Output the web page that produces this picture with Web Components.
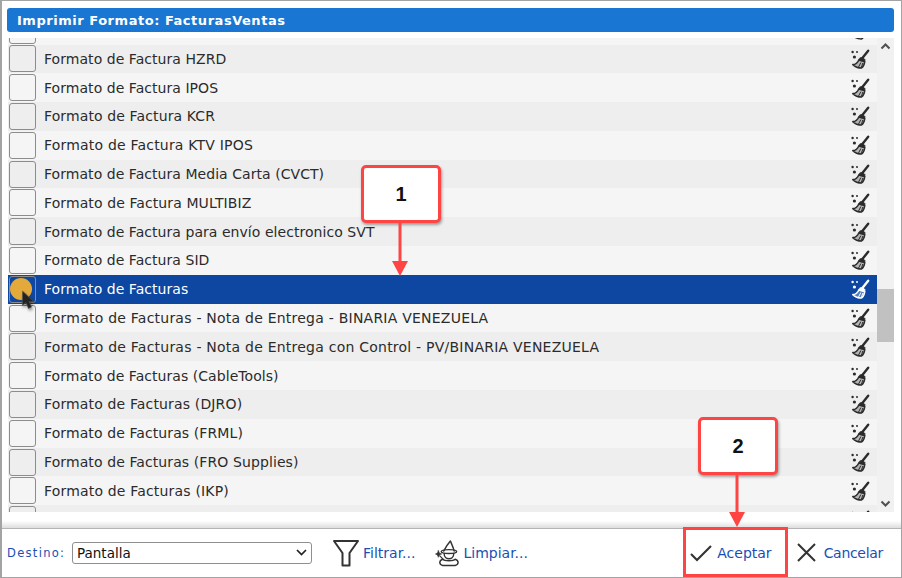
<!DOCTYPE html>
<html>
<head>
<meta charset="utf-8">
<title>Imprimir Formato</title>
<style>
  html, body { margin: 0; padding: 0; background: #fff; }
  body { width: 902px; height: 578px; overflow: hidden; font-family: "DejaVu Sans", sans-serif; }
</style>
</head>
<body>
<print-dialog>
  <title-bar slot="title">Imprimir Formato: FacturasVentas</title-bar>
  <format-list slot="list">
    <format-row></format-row>
    <format-row>Formato de Factura HZRD</format-row>
    <format-row>Formato de Factura IPOS</format-row>
    <format-row style="--track:.12px">Formato de Factura KCR</format-row>
    <format-row style="--track:.2px">Formato de Factura KTV IPOS</format-row>
    <format-row>Formato de Factura Media Carta (CVCT)</format-row>
    <format-row style="--track:.1px">Formato de Factura MULTIBIZ</format-row>
    <format-row>Formato de Factura para envío electronico SVT</format-row>
    <format-row>Formato de Factura SID</format-row>
    <format-row selected>Formato de Facturas</format-row>
    <format-row style="--track:.23px">Formato de Facturas - Nota de Entrega - BINARIA VENEZUELA</format-row>
    <format-row style="--track:.23px">Formato de Facturas - Nota de Entrega con Control - PV/BINARIA VENEZUELA</format-row>
    <format-row>Formato de Facturas (CableTools)</format-row>
    <format-row style="--track:.15px">Formato de Facturas (DJRO)</format-row>
    <format-row style="--track:.1px">Formato de Facturas (FRML)</format-row>
    <format-row style="--track:.1px">Formato de Facturas (FRO Supplies)</format-row>
    <format-row style="--track:.18px">Formato de Facturas (IKP)</format-row>
    <format-row></format-row>
  </format-list>
  <footer-bar slot="footer"></footer-bar>
  <call-out slot="over" style="left:361px;top:165px" arrow="53">1</call-out>
  <call-out slot="over" style="left:698px;top:417px" arrow="52">2</call-out>
  <click-mark slot="over"></click-mark>
</print-dialog>

<script>
const BROOM = `
  <svg viewBox="0 0 20 20" width="20" height="20" fill="none" stroke="currentColor">
    <circle cx="2.6" cy="3" r="1.2" fill="currentColor" stroke="none"/>
    <circle cx="7" cy="3" r="1" fill="currentColor" stroke="none"/>
    <circle cx="4.4" cy="8" r="1.6" fill="currentColor" stroke="none"/>
    <path d="M18.2 1.8 L12.4 9" stroke-width="2.4" stroke-linecap="round"/>
    <path d="M9.4 9.4 C10.6 7.8 13.4 8.4 15 10.6 L14.6 12.6 L8.6 11.2 Z" fill="currentColor" stroke="currentColor" stroke-width=".8" stroke-linejoin="round"/>
    <path d="M8.8 11 L14.8 12.4 C14.4 15.4 13 18 11.6 19 C8.6 19 5 17.8 2.8 15.6 C5.6 15.6 7.6 13.8 8.8 11 Z" fill="currentColor" fill-opacity=".3" stroke-width="1.5" stroke-linejoin="round"/>
    <path d="M8.6 18 L10.8 13.6 M11.4 18.4 L12.8 14" stroke-width="1"/>
  </svg>`;

class PrintDialog extends HTMLElement {
  constructor() {
    super();
    this.attachShadow({ mode: 'open' }).innerHTML = `
    <style>
      :host {
        display: flex;
        flex-direction: column;
        position: relative;
        box-sizing: border-box;
        width: 902px;
        height: 578px;
        border: solid #a3a3a3;
        border-width: 1px 1px 1px 2px;
        background: #fff;
        overflow: hidden;
      }
      .body {
        flex: none;
        display: flex;
        flex-direction: column;
        padding: 7px 7px 0 5px;
      }
      .fade { flex: 1; background: linear-gradient(#fff 55%, #dedede); }
      .over { position: absolute; left: -2px; top: -1px; }
    </style>
    <div class="body">
      <slot name="title"></slot>
      <slot name="list"></slot>
    </div>
    <div class="fade"></div>
    <slot name="footer"></slot>
    <div class="over"><slot name="over"></slot></div>`;
  }
}

class TitleBar extends HTMLElement {
  constructor() {
    super();
    this.attachShadow({ mode: 'open' }).innerHTML = `
    <style>
      :host {
        display: flex;
        align-items: center;
        flex: none;
        height: 24px;
        padding-left: 10px;
        background: #1976d2;
        border-radius: 3px;
        color: #fff;
        font: bold 13px "DejaVu Sans", sans-serif;
        letter-spacing: 0.53px;
      }
    </style><slot></slot>`;
  }
}

class FormatList extends HTMLElement {
  constructor() {
    super();
    this.attachShadow({ mode: 'open' }).innerHTML = `
    <style>
      :host {
        display: flex;
        flex: none;
        height: 474px;
        margin-top: 6px;
        overflow: hidden;
      }
      .view { width: 869px; margin-left: 1px; overflow: hidden; }
      .rows { display: flex; flex-direction: column; margin-top: -22.3px; }
      .bar {
        position: relative;
        width: 17px;
        background: #f1f1f1;
      }
      .thumb { position: absolute; left: 0; right: 0; top: 251px; height: 53px; background: #c1c1c1; }
      .bar svg { position: absolute; left: 3px; }
    </style>
    <div class="view"><div class="rows"><slot></slot></div></div>
    <div class="bar">
      <svg style="top:4px" width="11" height="8" viewBox="0 0 11 8"><path d="M1.5 6.5 L5.5 2.5 L9.5 6.5" fill="none" stroke="#505050" stroke-width="2"/></svg>
      <div class="thumb"></div>
      <svg style="top:462px" width="11" height="8" viewBox="0 0 11 8"><path d="M1.5 1.5 L5.5 5.5 L9.5 1.5" fill="none" stroke="#505050" stroke-width="2"/></svg>
    </div>`;
  }
}

class FormatRow extends HTMLElement {
  constructor() {
    super();
    this.attachShadow({ mode: 'open' }).innerHTML = `
    <style>
      :host {
        display: flex;
        align-items: center;
        flex: none;
        height: 28.8px;
        box-sizing: border-box;
        background: #f5f5f5;
        color: #2b2b2b;
        font: 14px "DejaVu Sans", sans-serif;
        letter-spacing: var(--track, .05px);
      }
      :host(:nth-child(even)) { background: #eeeeee; }
      :host([selected]) { background: #0d47a1; color: #fff; }
      .check {
        flex: none;
        box-sizing: border-box;
        width: 27px;
        height: 27px;
        margin: 0 8px 0 1px;
        border: 1px solid #8c8c8c;
        border-radius: 3px;
      }
      .text { flex: 1; white-space: nowrap; }
      .broom { flex: none; display: flex; margin-right: 7px; }
    </style>
    <span class="check"></span>
    <span class="text"><slot></slot></span>
    <span class="broom">${BROOM}</span>`;
  }
}

class FooterBar extends HTMLElement {
  constructor() {
    super();
    this.attachShadow({ mode: 'open' }).innerHTML = `
    <style>
      :host {
        display: flex;
        align-items: center;
        flex: none;
        height: 49px;
        box-sizing: border-box;
        border-top: 1px solid #b5b5b5;
        padding: 0 0 1px 5px;
        color: #1a4fb5;
        font: 14px "DejaVu Sans", sans-serif;
      }
      .dest { font-size: 11.5px; letter-spacing: 1.3px; width: 65px; }
      .sel {
        box-sizing: border-box;
        display: flex;
        align-items: center;
        justify-content: space-between;
        width: 240px;
        height: 22px;
        padding: 0 4px 0 4px;
        border: 1px solid #8f8f8f;
        border-radius: 3px;
        color: #111;
        font-size: 13.5px;
      }
      .tool { display: flex; align-items: center; gap: 3px; }
      .tool svg { display: block; color: #333; }
    </style>
    <span class="dest">Destino:</span>
    <span class="sel">Pantalla
      <svg width="11" height="7" viewBox="0 0 11 7"><path d="M1 1 L5.5 5.5 L10 1" fill="none" stroke="#222" stroke-width="1.7"/></svg>
    </span>
    <span class="tool" style="margin-left:20px">
      <svg width="28" height="28" viewBox="0 0 28 28" fill="none" stroke="currentColor" stroke-width="2" stroke-linejoin="round">
        <path d="M2 2 H26 L17.5 14 V26.5 H10.5 V14 Z"/>
      </svg>Filtrar...
    </span>
    <span class="tool" style="margin-left:20px;gap:3px">
      <svg width="25" height="28" viewBox="0 0 26 28" fill="none" stroke="currentColor" stroke-width="1.5" stroke-linejoin="round" stroke-linecap="round">
        <path d="M9 12 C11 8 13 5 16 1.5 C17 4 19 8 20 12"/>
        <ellipse cx="14.5" cy="12.5" rx="8" ry="2"/>
        <path d="M9.5 14.5 C9.5 18 12 20 14.5 20 C17 20 19.5 18 19.5 14.5"/>
        <path d="M8 27 C4 26 4 22 8 20.5 C10 22.5 19 22.5 21 20.5 C25 22 25 26 21 27 Z"/>
        <path d="M3.5 11.5 L4.5 14 L7 15 L4.5 16 L3.5 18.5 L2.5 16 L0.5 15 L2.5 14 Z" fill="currentColor" stroke-width=".6"/>
        <path d="M5 17 L8.5 20.5" stroke-width="1.3"/>
      </svg>Limpiar...
    </span>
    <span class="tool" style="margin-left:auto;gap:4px;margin-right:24px">
      <svg width="24" height="18" viewBox="0 0 24 18" fill="none" stroke="currentColor" stroke-width="2.1"><path d="M2 10 L8 16 L22 2"/></svg>Aceptar
    </span>
    <span class="tool" style="margin-right:18px;gap:7px;letter-spacing:-.3px">
      <svg width="21" height="21" viewBox="0 0 21 21" fill="none" stroke="currentColor" stroke-width="2"><path d="M2 2 L19 19 M19 2 L2 19"/></svg>Cancelar
    </span>`;
  }
}

// recuadro numerado con flecha hacia abajo
class CallOut extends HTMLElement {
  constructor() {
    super();
    this.attachShadow({ mode: 'open' }).innerHTML = `
    <style>
      :host {
        display: block;
        position: absolute;
        width: 80px;
        height: 58px;
      }
      .box {
        box-sizing: border-box;
        height: 100%;
        display: flex;
        align-items: center;
        justify-content: center;
        background: #fff;
        border: 3px solid #ff4444;
        border-radius: 5px;
        box-shadow: 1px 2px 3px rgba(0,0,0,.35);
        color: #111;
        font: bold 20px "Liberation Sans", sans-serif;
      }
      svg { position: absolute; left: 31px; top: 58px; }
    </style>
    <div class="box"><slot></slot></div>
    <svg width="16" height="${this.getAttribute('arrow')}" viewBox="0 0 16 ${this.getAttribute('arrow')}"></svg>`;
    const h = +this.getAttribute('arrow');
    this.shadowRoot.querySelector('svg').innerHTML =
      `<path d="M8 0 V${h - 10}" stroke="#ff4444" stroke-width="3"/><path d="M0 ${h - 15} H16 L8 ${h} Z" fill="#ff4444"/>`;
  }
}

// resaltado del clic y puntero, mas el marco rojo de Aceptar
class ClickMark extends HTMLElement {
  constructor() {
    super();
    this.attachShadow({ mode: 'open' }).innerHTML = `
    <style>
      :host { display: block; }
      .dot { position: absolute; left: 10px; top: 278px; width: 22px; height: 22px; border-radius: 50%; background: #e3a93b; }
      svg { position: absolute; left: 21px; top: 290px; filter: drop-shadow(1px 2px 1.5px rgba(0,0,0,.45)); }
      .frame { position: absolute; left: 683px; top: 527px; width: 99px; height: 44px; border: 3px solid #ff4444; }
    </style>
    <div class="dot"></div>
    <svg width="14" height="20" viewBox="0 0 14 20"><path d="M1.5 1 V15.5 L5 12.5 L7.5 18.5 L10.5 17 L8 11.5 H12.5 Z" fill="#222" stroke="#555" stroke-width=".6"/></svg>
    <div class="frame"></div>`;
  }
}

customElements.define('print-dialog', PrintDialog);
customElements.define('title-bar', TitleBar);
customElements.define('format-list', FormatList);
customElements.define('format-row', FormatRow);
customElements.define('footer-bar', FooterBar);
customElements.define('call-out', CallOut);
customElements.define('click-mark', ClickMark);
</script>
</body>
</html>
